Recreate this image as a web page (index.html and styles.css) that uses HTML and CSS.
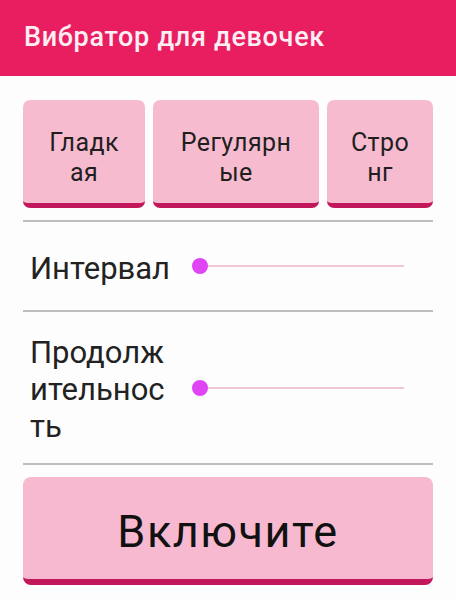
FILE: index.html
```html
<!DOCTYPE html>
<html lang="ru">
<head>
<meta charset="utf-8">
<link rel="stylesheet" href="styles.css">
</head>
<body>
<header class="appbar">Вибратор для девочек</header>
<main class="content">
  <div class="modes">
    <button class="mode mode-1">Гладк<br>ая</button>
    <button class="mode mode-2">Регулярн<br>ые</button>
    <button class="mode mode-3">Стро<br>нг</button>
  </div>
  <div class="divider"></div>
  <div class="row row-interval">
    <div class="label">Интервал</div>
    <div class="slider"><div class="track"></div><div class="thumb"></div></div>
  </div>
  <div class="divider"></div>
  <div class="row row-duration">
    <div class="label">Продолж<br>ительнос<br>ть</div>
    <div class="slider"><div class="track"></div><div class="thumb"></div></div>
  </div>
  <div class="divider"></div>
  <button class="start">Включите</button>
</main>
</body>
</html>
```
FILE: styles.css
```css
* { box-sizing: border-box; }
html, body { margin: 0; padding: 0; background: #fdfdfd; }
body { width: 456px; height: 600px; overflow: hidden; font-family: Roboto, "Noto Sans", sans-serif; }
.appbar {
  height: 76px;
  background: #e91e61;
  color: #fdeef3;
  font-size: 27px;
  font-weight: 500;
  letter-spacing: 0.7px;
  display: flex;
  align-items: center;
  padding-left: 24px;
  padding-bottom: 2px;
}
.content { padding: 24px 23px 0 23px; }
.modes { display: flex; gap: 8px; height: 108px; }
.mode {
  border: none;
  background: #f7bbd0;
  border-radius: 7px;
  border-bottom: 5px solid #c2185b;
  font-family: Roboto, sans-serif;
  font-size: 25px;
  letter-spacing: 0.4px;
  line-height: 30px;
  color: #1f1f1f;
  padding: 12px 0 0 0;
  margin: 0;
}
.mode-1 { width: 122px; }
.mode-2 { width: 166px; }
.mode-3 { width: 106px; }
.divider { height: 2px; background: #bdbdbd; margin-top: 12px; }
.row { display: flex; align-items: center; }
.row-interval { height: 88px; }
.row-duration { height: 151px; }
.label {
  width: 169px;
  padding-left: 7px;
  font-size: 31px;
  line-height: 37px;
  color: #222;
  flex-shrink: 0;
  white-space: nowrap;
}
.row-interval .label { padding-top: 4px; }
.row-duration .label { padding-top: 4px; }
.slider { position: relative; width: 212px; height: 16px; }
.track { position: absolute; left: 8px; right: 0; top: 7px; height: 2px; background: #f1c6d8; }
.thumb { position: absolute; left: 0; top: 0; width: 16px; height: 16px; border-radius: 50%; background: #df44f5; }
.row + .divider { margin-top: 0; }
.start {
  display: block;
  width: 410px;
  height: 108px;
  margin-top: 12px;
  border: none;
  border-bottom: 6px solid #c2185b;
  border-radius: 8px;
  background: #f6b9cf;
  font-family: Roboto, sans-serif;
  font-size: 45px;
  letter-spacing: 1.5px;
  color: #111;
  padding: 6px 0 0 0;
}
```
